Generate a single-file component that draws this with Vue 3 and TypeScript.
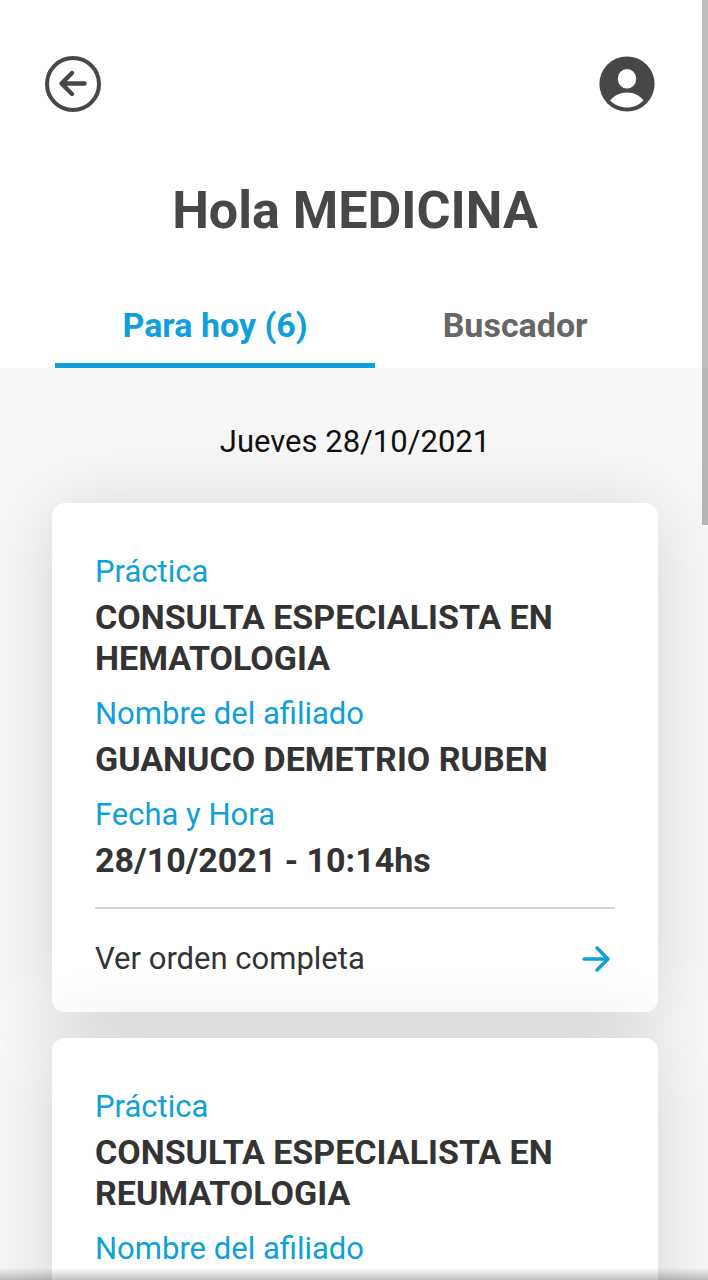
<script setup lang="ts">
import { ref } from 'vue'

interface Campo {
  etiqueta: string
  valor?: string
}

interface Orden {
  id: number
  campos: Campo[]
  completa: boolean
}

type Tab = 'hoy' | 'buscador'

const tab = ref<Tab>('hoy')

const ordenes: Orden[] = [
  {
    id: 1,
    campos: [
      { etiqueta: 'Práctica', valor: 'CONSULTA ESPECIALISTA EN HEMATOLOGIA' },
      { etiqueta: 'Nombre del afiliado', valor: 'GUANUCO DEMETRIO RUBEN' },
      { etiqueta: 'Fecha y Hora', valor: '28/10/2021 - 10:14hs' },
    ],
    completa: true,
  },
  {
    id: 2,
    campos: [
      { etiqueta: 'Práctica', valor: 'CONSULTA ESPECIALISTA EN REUMATOLOGIA' },
      { etiqueta: 'Nombre del afiliado' },
    ],
    completa: false,
  },
]
</script>

<template>
  <div class="screen">
    <header class="header">
      <div class="toolbar">
        <button class="icon-button" type="button" aria-label="Volver">
          <svg viewBox="0 0 56 56" width="56" height="56" fill="none" stroke="#474747">
            <circle cx="28" cy="28" r="26" stroke-width="4" />
            <path d="M39.500 27.500H17M27 17L16.500 27.500L27 38" stroke-width="4.400" stroke-linecap="round" stroke-linejoin="round" />
          </svg>
        </button>
        <button class="icon-button" type="button" aria-label="Perfil">
          <svg viewBox="0 0 56 56" width="56" height="56">
            <circle cx="28" cy="28" r="27.6" fill="#474747" />
            <ellipse cx="28" cy="22.8" rx="9.2" ry="9.8" fill="#fff" />
            <path d="M11 44.500C15 39.500 21 36.500 28 36.500S41 39.500 44.500 44.500C40 49 34.500 51.500 28 51.500S15.500 49 11 44.500Z" fill="#fff" />
          </svg>
        </button>
      </div>
      <h1 class="title">Hola MEDICINA</h1>
      <nav class="tabs" role="tablist">
        <button class="tab" :class="{ active: tab === 'hoy' }" type="button" role="tab" :aria-selected="tab === 'hoy'" @click="tab = 'hoy'">Para hoy (6)</button>
        <button class="tab" :class="{ active: tab === 'buscador' }" type="button" role="tab" :aria-selected="tab === 'buscador'" @click="tab = 'buscador'">Buscador</button>
      </nav>
    </header>

    <main class="content">
      <p class="date">Jueves 28/10/2021</p>
      <article v-for="orden in ordenes" :key="orden.id" class="card">
        <dl class="fields" :class="{ divided: orden.completa }">
          <div v-for="campo in orden.campos" :key="campo.etiqueta" class="field">
            <dt>{{ campo.etiqueta }}</dt>
            <dd v-if="campo.valor">{{ campo.valor }}</dd>
          </div>
        </dl>
        <a v-if="orden.completa" class="more" href="#">
          <span>Ver orden completa</span>
          <svg viewBox="0 0 28 28" width="28" height="28" fill="none" stroke="#0f9fda" stroke-width="3.4" stroke-linecap="round" stroke-linejoin="round" aria-hidden="true">
            <path d="M2 14H26M15 3L26 14L15 25" />
          </svg>
        </a>
      </article>
    </main>

    <div class="scroll-thumb" aria-hidden="true"></div>
    <div class="bottom-shade" aria-hidden="true"></div>
  </div>
</template>

<style>
body {
  margin: 0;
  background: #f7f7f7;
}
</style>

<style scoped>
.screen {
  height: 100vh;
  overflow-y: auto;
  scrollbar-width: none;
  background: #f7f7f7;
  font-family: Roboto, "Liberation Sans", sans-serif;
  color: #333;
}

.header {
  padding: 56px 53px 0 55px;
  background: #fff;
}

.toolbar {
  display: flex;
  justify-content: space-between;
  margin-left: -10px;
}

.icon-button {
  display: flex;
  padding: 0;
  border: 0;
  background: none;
  cursor: pointer;
}

.title {
  margin: 69px 0 0;
  font-size: 52px;
  line-height: 60px;
  font-weight: 700;
  text-align: center;
  color: #474747;
}

.tabs {
  display: flex;
  margin-top: 46px;
}

.tab {
  flex: 1 1 auto;
  padding: 18px 0 17px;
  border: 0;
  border-bottom: 5px solid transparent;
  background: none;
  font-family: inherit;
  font-size: 34px;
  line-height: 41px;
  font-weight: 700;
  color: #666;
  cursor: pointer;
}

.tab.active {
  border-bottom-color: #0f9fda;
  color: #0f9fda;
}

.content {
  padding: 56px 50px 26px 52px;
}

.date {
  margin: 0 0 43px;
  font-size: 31px;
  line-height: 36px;
  text-align: center;
  color: #111;
}

.card {
  position: relative;
  min-height: 320px;
  margin-bottom: 26px;
  padding: 51px 43px 35px;
  border-radius: 13px;
  background: #fff;
  box-shadow: 0 5px 80px rgba(0, 0, 0, 0.14);
}

.fields {
  display: flex;
  flex-direction: column;
  gap: 17px;
  margin: 0;
}

.fields.divided {
  padding-bottom: 26px;
  border-bottom: 2px solid #d2d2d2;
}

.field dt {
  font-size: 31px;
  line-height: 36px;
  color: #0f9fda;
}

.field dd {
  margin: 7px 0 0;
  font-size: 34px;
  line-height: 41px;
  font-weight: 700;
}

.more {
  display: flex;
  align-items: center;
  justify-content: space-between;
  padding: 32px 5px 0 0;
  font-size: 31px;
  line-height: 36px;
  color: #333;
  text-decoration: none;
}

/* Overlays pinned to the viewport */
.scroll-thumb {
  position: fixed;
  top: 0;
  right: 0;
  width: 6px;
  height: 41vh;
  background: rgba(0, 0, 0, 0.26);
}

.bottom-shade {
  position: fixed;
  right: 0;
  bottom: 0;
  left: 0;
  height: 12px;
  background: linear-gradient(to bottom, rgba(0, 0, 0, 0), rgba(0, 0, 0, 0.24));
}
</style>
